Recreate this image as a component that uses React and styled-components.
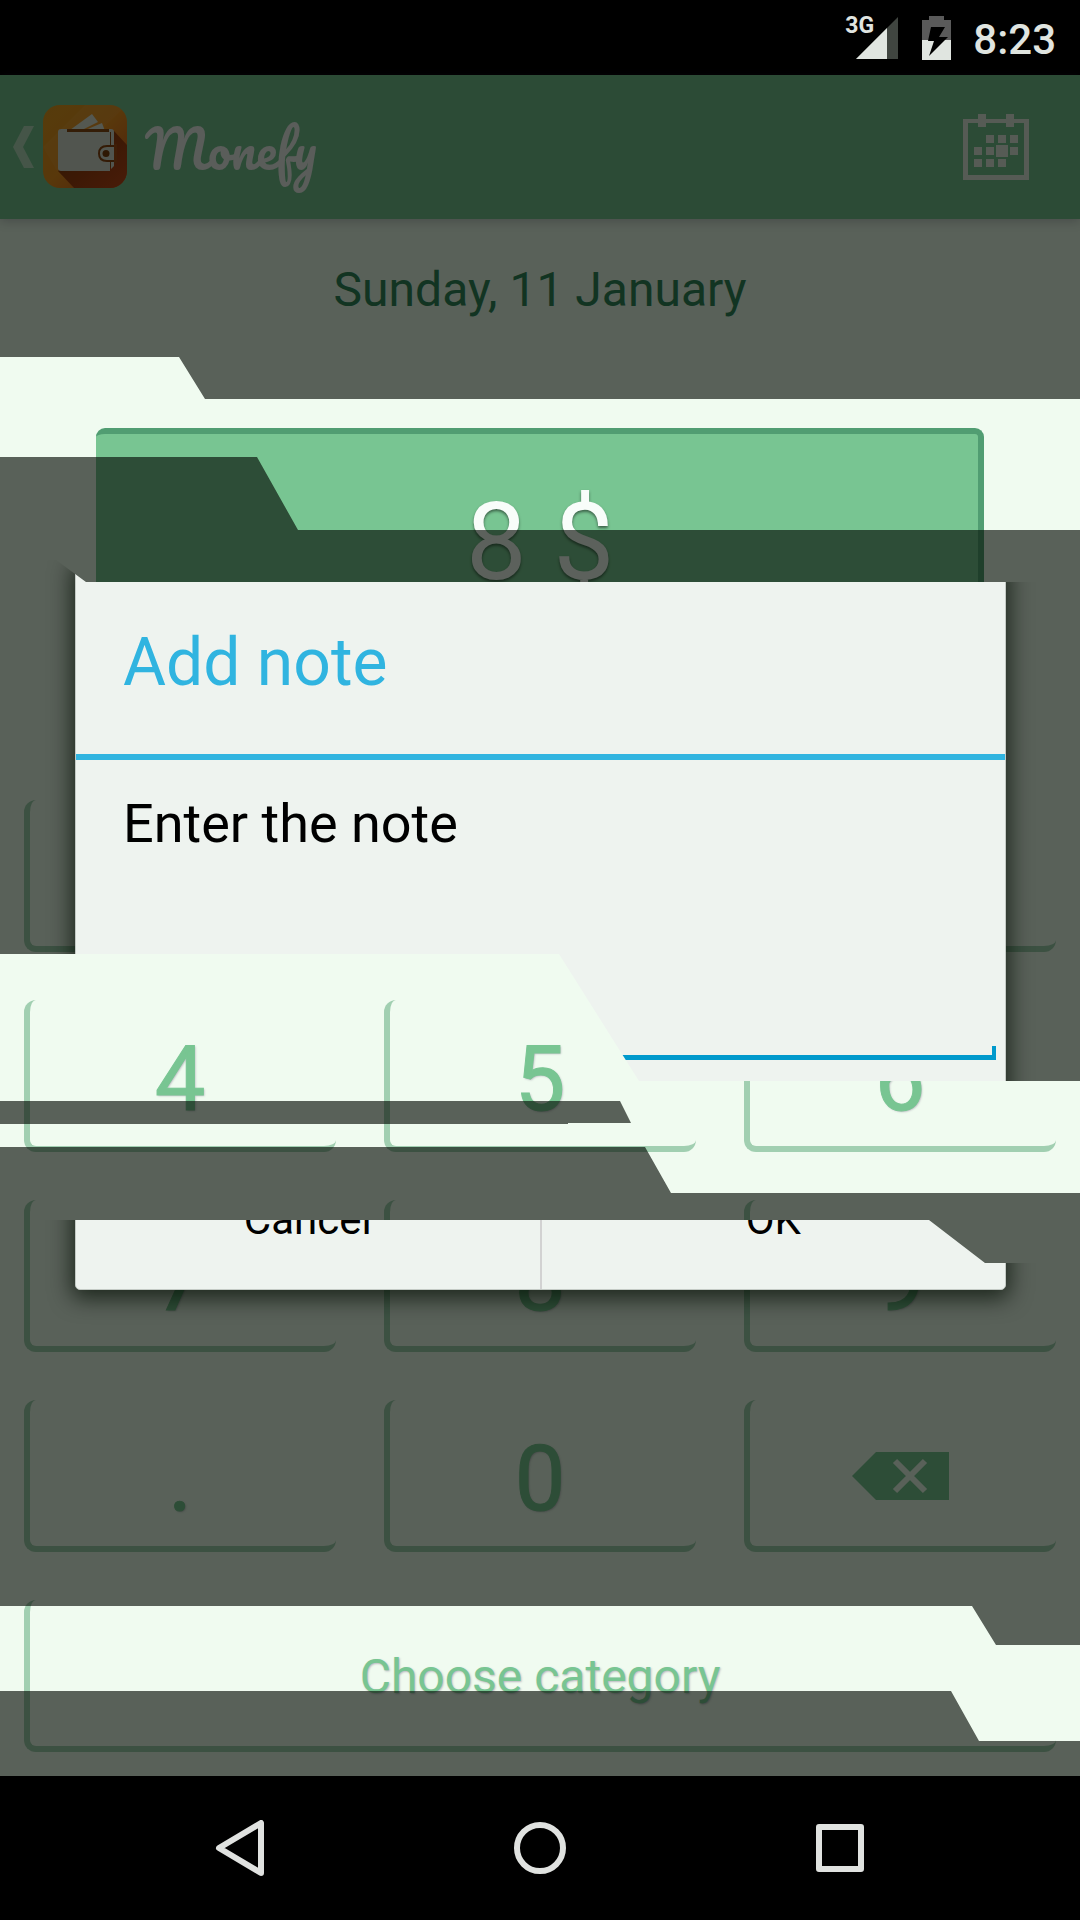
import React from "react";
import styled, { createGlobalStyle } from "styled-components";

const GlobalStyle = createGlobalStyle`
  *, *::before, *::after { box-sizing: border-box; }
  body { margin: 0; background: #000; }
  button, input { font: inherit; color: inherit; margin: 0; }
  button { padding: 0; border: 0; background: none; cursor: pointer; }
`;

const Screen = styled.div`
  min-height: 100vh;
  display: flex;
  flex-direction: column;
  background: #000;
  font-family: Roboto, "Noto Sans", sans-serif;
`;

const StatusBar = styled.header`
  height: 75px;
  padding: 0 24px;
  display: flex;
  align-items: center;
  justify-content: flex-end;
  gap: 22px;
  color: #e0e5e0;
`;

const Signal = styled.div`
  position: relative;
  display: flex;
  margin-right: 2px;
`;

const Network = styled.span`
  position: absolute;
  top: -3px;
  left: -11px;
  font-size: 23px;
  line-height: 24px;
  font-weight: 700;
`;

const Clock = styled.time`
  font-size: 42px;
  line-height: 48px;
  font-weight: 500;
  padding-top: 4px;
`;

const Stage = styled.div`
  position: relative;
  flex: 1;
  display: flex;
  flex-direction: column;
`;

const AppBar = styled.div`
  height: 144px;
  display: flex;
  align-items: center;
  padding: 0 51px 0 12px;
  background: #75bf91;
  box-shadow: 0 2px 10px rgba(40, 20, 60, 0.25);
  z-index: 1;
`;

const HomeButton = styled.button`
  display: flex;
  align-items: center;
  gap: 9px;
`;

const Wordmark = styled.h1`
  flex: 1;
  margin: 0 0 0 18px;
  padding-top: 4px;
  color: #f4f0f4;
  font-family: Pacifico, Lato, cursive;
  font-size: 51px;
  line-height: 60px;
  font-weight: 400;
`;

const IconButton = styled.button`
  display: flex;
`;

const Entry = styled.main`
  flex: 1;
  display: flex;
  flex-direction: column;
  background: #f0fbf0;
  padding: 43px 24px 24px;
`;

const DateHeading = styled.h2`
  margin: 0 0 110px;
  color: #2d8059;
  text-align: center;
  font-size: 48px;
  line-height: 56px;
  font-weight: 400;
`;

const Amount = styled.output`
  display: flex;
  align-items: center;
  justify-content: center;
  height: 221px;
  margin: 0 72px auto;
  padding-left: 6px;
  border-top: 6px solid #519d72;
  border-right: 6px solid #519d72;
  border-radius: 9px;
  background: #78c592;
  color: #f8fdfa;
  font-size: 108px;
  line-height: 128px;
  text-shadow: 0 2px 3px rgba(0, 0, 0, 0.5);
`;

const Keypad = styled.div`
  display: grid;
  grid-template-columns: repeat(3, 1fr);
  gap: 48px;
`;

const keyPadding = { digit: "14px", icon: "6px", wide: "8px" };

const Key = styled.button`
  grid-column: ${(p) => (p.$kind === "wide" ? "1 / -1" : "auto")};
  height: 152px;
  padding: ${(p) => keyPadding[p.$kind]} 6px 0 0;
  display: flex;
  align-items: center;
  justify-content: center;
  border-left: 6px solid #a1cfb1;
  border-bottom: 6px solid #a1cfb1;
  border-radius: 12px;
  color: #78c592;
  font-size: ${(p) => (p.$kind === "wide" ? "48px" : "90px")};
  line-height: 1;
  text-shadow: 1px 1px 2px rgba(80, 60, 100, 0.35);
  -webkit-text-stroke: ${(p) => (p.$kind === "wide" ? "0" : "1px #78c592")};
`;

/* The dimming layer is torn into four bands; page content shows undimmed in the gaps. */
const Scrim = styled.div`
  position: absolute;
  inset: 0;
  z-index: 2;
  background: rgba(3, 9, 3, 0.64);
  clip-path: polygon(
    0 0, 100% 0, 100% 324px, 205px 324px, 179px 282px, 0 282px,
    0 382px, 257px 382px, 298px 455px, 100% 455px, 100% 1006px, 642px 1006px, 562px 879px, 0 879px,
    0 1026px, 620px 1026px, 631px 1048px, 568px 1048px, 568px 1049px, 0 1049px,
    0 1072px, 645px 1072px, 671px 1118px, 100% 1118px, 100% 1570px, 996px 1570px, 972px 1531px, 0 1531px,
    0 1616px, 951px 1616px, 979px 1666px, 100% 1666px, 100% 100%, 0 100%
  );
`;

/* The dialog is visible in two bands only. */
const DialogLayer = styled.div`
  position: absolute;
  inset: 0;
  z-index: 3;
  display: flex;
  align-items: center;
  padding: 0 74px 0 75px;
  clip-path: polygon(
    0 485px, 56px 485px, 86px 507px, 100% 507px, 100% 1006px, 639px 1006px, 559px 879px, 0 879px,
    0 1145px, 929px 1145px, 985px 1188px, 100% 1188px, 100% 1300px, 0 1300px
  );
`;

const Dialog = styled.form`
  flex: 1;
  display: flex;
  flex-direction: column;
  background: #eef3ef;
  border: 1px solid #c4cac5;
  border-radius: 5px;
  box-shadow: 0 5px 22px 3px rgba(0, 12, 0, 0.7);
`;

const DialogTitle = styled.h2`
  margin: 0;
  padding: 9px 47px 0;
  color: #30b4e0;
  border-bottom: 6px solid #30b4e0;
  font-size: 66px;
  line-height: 182px;
  font-weight: 400;
`;

const DialogBody = styled.div`
  flex: 1;
  padding: 28px 9px 83px;
  display: flex;
  flex-direction: column;
`;

const NoteLabel = styled.label`
  padding: 0 38px;
  color: #000;
  font-size: 54px;
  line-height: 72px;
`;

const NoteInput = styled.input`
  height: 120px;
  margin-top: 80px;
  padding: 0 24px;
  border: 0;
  border-radius: 0;
  outline: 0;
  color: #000;
  font-size: 54px;
  background:
    linear-gradient(#0099cc, #0099cc) left bottom / 4px 14px no-repeat,
    linear-gradient(#0099cc, #0099cc) right bottom / 4px 14px no-repeat,
    linear-gradient(#0099cc, #0099cc) left bottom / 100% 5px no-repeat;
`;

const DialogActions = styled.div`
  display: flex;
  border-top: 2px solid #d2d5d3;
`;

const DialogButton = styled.button`
  flex: 1;
  height: 144px;
  padding-top: 6px;
  color: #000;
  font-size: 42px;
  line-height: 48px;

  & + & { border-left: 2px solid #d2d2d2; }
`;

const NavBar = styled.nav`
  height: 144px;
  padding: 0 90px;
  display: grid;
  grid-template-columns: repeat(3, 1fr);
`;

const NavButton = styled.button`
  display: flex;
  align-items: center;
  justify-content: center;
`;

const SignalIcon = () => (
  <svg width="42" height="42" viewBox="0 0 42 42" aria-hidden="true">
    <path d="M42 0V42H0Z" fill="#404540" />
    <path d="M31 11V42H0Z" fill="#e0e5e0" />
  </svg>
);

const BatteryIcon = () => (
  <svg width="29" height="44" viewBox="0 0 29 44" aria-hidden="true">
    <path d="M7 0H22V4H29V24H0V4H7Z" fill="#5a5a5a" />
    <path d="M0 24H29V44H0Z" fill="#e0e5e0" />
    <path d="M9 11H23L17 21H26L7 40L12 25H6Z" fill="#000" />
  </svg>
);

const UpIcon = () => (
  <svg width="22" height="42" viewBox="0 0 22 42" aria-hidden="true">
    <path d="M12 0H22L11 21L22 42H12L1 21Z" fill="#b9dcc1" />
  </svg>
);

const WalletLogo = () => (
  <svg width="84" height="84" viewBox="0 0 84 84" aria-hidden="true">
    <defs>
      <linearGradient id="tile" x1="0" y1="0" x2="1" y2="1">
        <stop offset="0" stopColor="#e8961c" />
        <stop offset="0.5" stopColor="#f08a1a" />
        <stop offset="1" stopColor="#d64a1c" />
      </linearGradient>
      <linearGradient id="cast" x1="0" y1="0" x2="1" y2="1">
        <stop offset="0" stopColor="#7a3000" />
        <stop offset="1" stopColor="#c63c14" />
      </linearGradient>
      <clipPath id="tileClip"><rect width="84" height="83" rx="17" /></clipPath>
    </defs>
    <g clipPath="url(#tileClip)">
      <rect width="84" height="84" fill="url(#tile)" />
      <path d="M0 42L42 0H84L14 66Z" fill="#fff" opacity="0.05" />
      <path d="M71 26L84 40V84H32L15 66L60 30Z" fill="url(#cast)" />
    </g>
    <path d="M27 25L49 9L55 17L37 26Z" fill="#e2e2da" />
    <path d="M40 26L59 18L62 26Z" fill="#e2e2da" />
    <path d="M17 24H66Q70 24 70 28V62H17Z" fill="#8a4210" />
    <path d="M16 24H24V27H67V66H18Q15 66 15 63V27Q15 24 18 24Z" fill="#dcdcd4" />
    <path d="M66 24H68Q71 24 71 27V42H68V27H66ZM68 54H71V61L68 64Z" fill="#dcdcd4" />
    <path d="M72 41H64Q56 41 56 48.500Q56 56 64 56H72Z" fill="#dcdcd4" stroke="#8a3a0c" strokeWidth="2" />
    <rect x="71" y="39" width="3" height="19" fill="#a84410" />
    <circle cx="63" cy="48.500" r="3.500" fill="#7a3208" />
  </svg>
);

const CalendarIcon = () => (
  <svg width="66" height="66" viewBox="0 0 66 66" fill="#e9eae6" aria-hidden="true">
    <path fillRule="evenodd" d="M0 5H66V66H0ZM5 9V61H61V9Z" />
    <path d="M15 0H23V13H15ZM43 0H51V13H43Z" />
    <path d="M23 21h8v8h-8zM35 21h8v8h-8zM47 21h8v8h-8zM11 33h8v8h-8zM23 33h8v8h-8zM47 33h8v8h-8zM11 45h8v8h-8zM23 45h8v8h-8zM35 45h8v8h-8z" />
    <path d="M33 31h12v12h-12z" />
  </svg>
);

const BackspaceIcon = () => (
  <svg width="97" height="48" viewBox="0 0 97 48" aria-hidden="true">
    <path d="M0 24L24 0H97V48H24Z" fill="#78c592" />
    <path d="M43 9L73 39M73 9L43 39" stroke="#f0fbf0" strokeWidth="6" />
  </svg>
);

const BackIcon = () => (
  <svg width="50" height="56" viewBox="0 0 50 56" fill="none" stroke="#e0e2e0" strokeWidth="6" strokeLinejoin="round" aria-hidden="true">
    <path d="M46 3V53L4 28Z" />
  </svg>
);

const HomeIcon = () => (
  <svg width="54" height="54" viewBox="0 0 54 54" fill="none" stroke="#e0e2e0" strokeWidth="6" aria-hidden="true">
    <circle cx="27" cy="27" r="23" />
  </svg>
);

const RecentIcon = () => (
  <svg width="48" height="48" viewBox="0 0 48 48" fill="none" stroke="#e0e2e0" strokeWidth="6" strokeLinejoin="round" aria-hidden="true">
    <path d="M3 3H45V45H3Z" />
  </svg>
);

/* The first row lies behind the dialog, so its keys carry a name but no face. */
const COVERED_KEYS = ["1", "2", "3"];
const KEYS = ["4", "5", "6", "7", "8", "9", ".", "0"];

export default function App() {
  return (
    <Screen>
      <GlobalStyle />
      <StatusBar>
        <Signal>
          <Network>3G</Network>
          <SignalIcon />
        </Signal>
        <BatteryIcon />
        <Clock>8:23</Clock>
      </StatusBar>

      <Stage>
        <AppBar>
          <HomeButton type="button" aria-label="Navigate up">
            <UpIcon />
            <WalletLogo />
          </HomeButton>
          <Wordmark>Monefy</Wordmark>
          <IconButton type="button" aria-label="Choose date">
            <CalendarIcon />
          </IconButton>
        </AppBar>

        <Entry>
          <DateHeading>Sunday, 11 January</DateHeading>
          <Amount>8 $</Amount>
          <Keypad>
            {COVERED_KEYS.map((key) => (
              <Key key={key} type="button" $kind="digit" aria-label={key} />
            ))}
            {KEYS.map((key) => (
              <Key key={key} type="button" $kind="digit">{key}</Key>
            ))}
            <Key type="button" $kind="icon" aria-label="Backspace">
              <BackspaceIcon />
            </Key>
            <Key type="button" $kind="wide">Choose category</Key>
          </Keypad>
        </Entry>

        <Scrim />

        <DialogLayer>
          <Dialog role="dialog" aria-labelledby="dialog-title">
            <DialogTitle id="dialog-title">Add note</DialogTitle>
            <DialogBody>
              <NoteLabel htmlFor="note">Enter the note</NoteLabel>
              <NoteInput id="note" type="text" />
            </DialogBody>
            <DialogActions>
              <DialogButton type="button">Cancel</DialogButton>
              <DialogButton type="button">OK</DialogButton>
            </DialogActions>
          </Dialog>
        </DialogLayer>
      </Stage>

      <NavBar>
        <NavButton type="button" aria-label="Back"><BackIcon /></NavButton>
        <NavButton type="button" aria-label="Home"><HomeIcon /></NavButton>
        <NavButton type="button" aria-label="Recent apps"><RecentIcon /></NavButton>
      </NavBar>
    </Screen>
  );
}
